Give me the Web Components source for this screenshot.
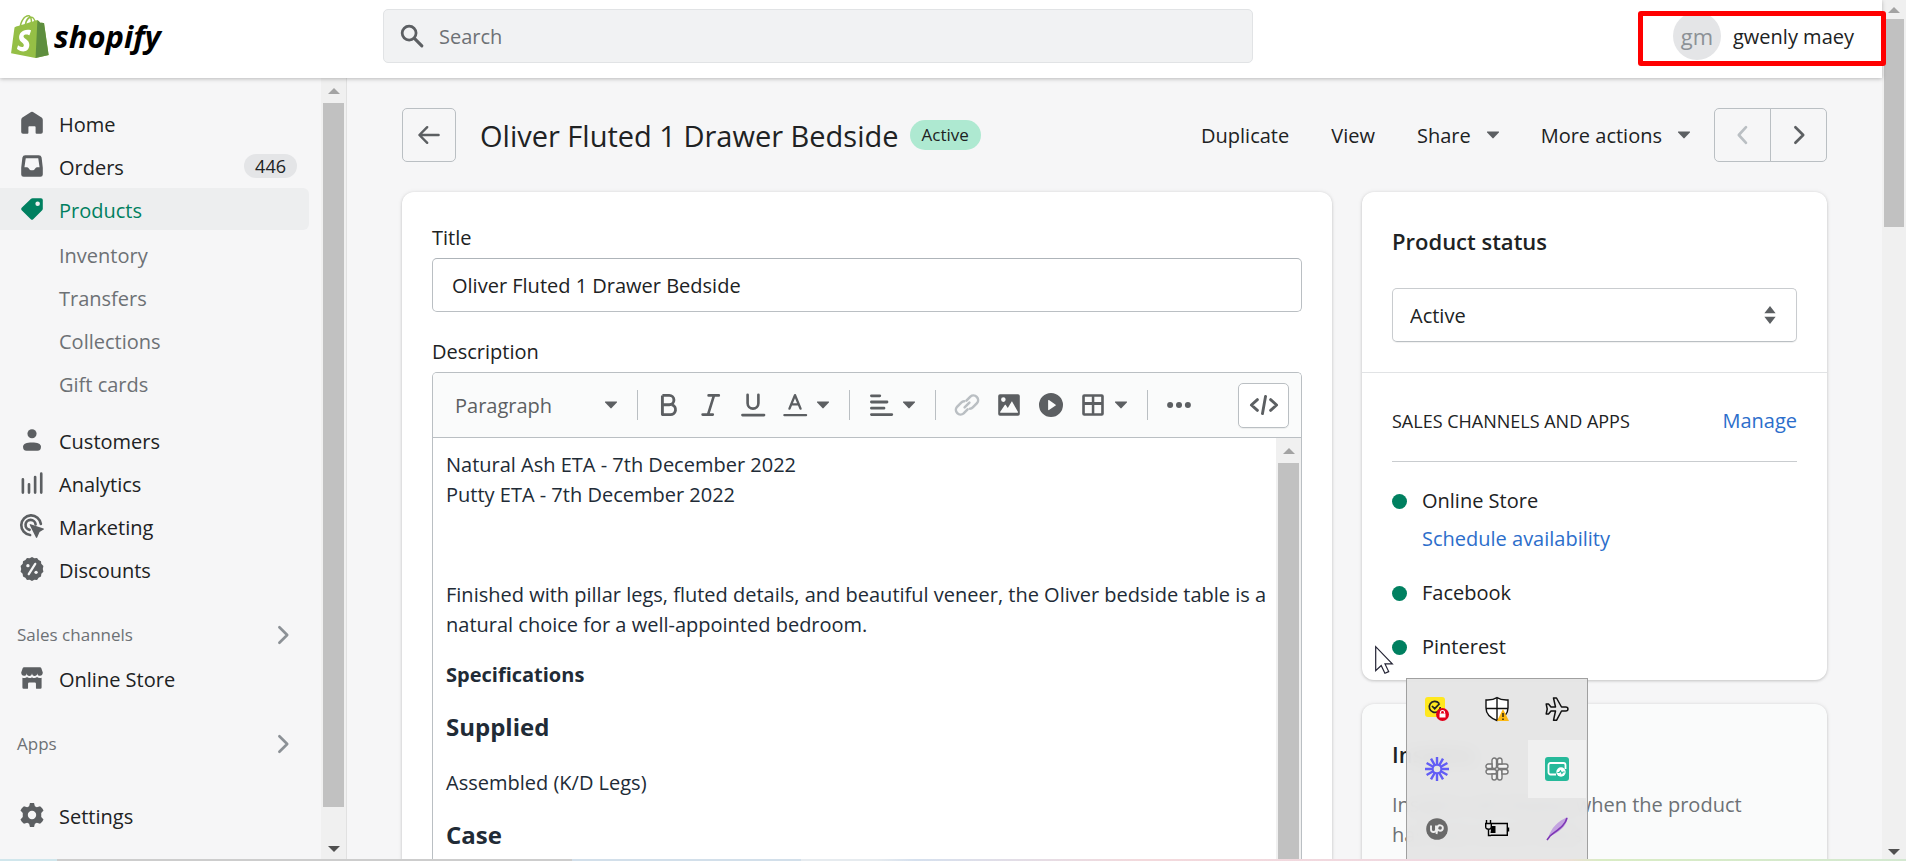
<!DOCTYPE html>
<html lang="en">
<head>
<meta charset="utf-8">
<meta name="viewport" content="width=device-width, initial-scale=1">
<title>Oliver Fluted 1 Drawer Bedside · Products</title>
<style>
  html, body { height: 100%; margin: 0; }
  body {
    --text: #202223; --subdued: #6d7175; --icon: #5c5f62; --line: #babfc3;
    --green: #008060; --link: #2c6ecb; --page: #f6f6f7;
    font: 20px/24px "Open Sans", "Noto Sans", sans-serif;
    color: var(--text); background: var(--page); overflow: hidden;
  }
</style>
</head>
<body>
<admin-shell></admin-shell>
<script>
const define = (name, html, setup) => {
  const tpl = document.createElement('template');
  tpl.innerHTML = `<style>*,*::before,*::after{box-sizing:border-box}
    button,input,select{font:inherit;color:inherit;margin:0}button{padding:0;background:none;border:0}
    a{color:inherit;text-decoration:none}</style>` + html;
  customElements.define(name, class extends HTMLElement {
    constructor() {
      super();
      this.attachShadow({ mode: 'open' }).append(tpl.content.cloneNode(true));
    }
    connectedCallback() { if (setup) setup(this, this.shadowRoot); }
  });
};

/* 20-unit icon set */
const ICONS = {
  home: '<path d="M9.2.8a1.4 1.4 0 0 1 1.600 0l7.200 4.700c.6.5 1 1.200 1 2V17.500A1.500 1.500 0 0 1 17.500 19h-3.700a.8.8 0 0 1-.8-.8V13.500a.7.7 0 0 0-.7-.7H7.700a.7.7 0 0 0-.7.7v4.700a.8.8 0 0 1-.8.8H2.500A1.500 1.500 0 0 1 1 17.500V7.500c0-.8.4-1.500 1-2z"/>',
  orders: '<path fill-rule="evenodd" d="M4.500 1h11A2.500 2.500 0 0 1 18 3l1 8.500V17a2 2 0 0 1-2 2H3a2 2 0 0 1-2-2v-5.500L2 3a2.500 2.500 0 0 1 2.500-2zM4.800 3.500 3.700 11h2.100c.5 0 .9.3 1.200.7l.8 1c.3.5.8.8 1.300.8h1.800c.5 0 1-.3 1.300-.8l.8-1c.3-.4.7-.7 1.200-.7h2.100l-1.100-7.500z"/>',
  products: '<path fill-rule="evenodd" d="M10.500 1h7A1.500 1.500 0 0 1 19 2.500v7.200c0 .5-.2 1-.5 1.300L11 18.500a1.400 1.400 0 0 1-2 0L1.400 11a1.400 1.400 0 0 1 0-2L9 1.600c.4-.4.9-.6 1.500-.6zm4.200 6.500a1.900 1.900 0 1 0 0-3.800 1.900 1.900 0 0 0 0 3.800z"/>',
  customers: '<circle cx="10" cy="4.800" r="3.800"/><path d="M2.500 15.700C2.500 13 5.500 12 10 12s7.500 1 7.500 3.700c0 2.100-1 3.300-2.900 3.300H5.400c-1.900 0-2.900-1.200-2.900-3.300z"/>',
  analytics: '<path d="M2.400 7v11M7.500 11v7M12.600 5v13M17.700 2.200V18" fill="none" stroke="currentColor" stroke-width="2.200" stroke-linecap="round"/>',
  marketing: '<path d="M17.400 8.300A8.200 8.200 0 1 0 8.400 17.500M13 8.600a4.200 4.200 0 1 0-5 4.600" fill="none" stroke="currentColor" stroke-width="2.200" stroke-linecap="round"/><path d="m8.300 8.300 11.300 3.700c.5.2.5.8.1 1l-3.400 2-2 4.600c-.2.5-.8.5-1 0L8 9z"/>',
  discounts: '<path fill-rule="evenodd" d="m10 0 2 1 2.200-.2 1.300 1.800 2 .9.200 2.200 1.800 1.900L19 10l.5 2.300-1.700 1.700-.3 2.200-2 1-1.300 1.900-2.200-.2-2 1.100-2-1.100-2.200.2-1.300-1.900-2-1-.3-2.200L.500 12.300 1 10 .5 7.600l1.800-1.900.2-2.200 2-.9L5.800.8 8 1z"/><circle cx="6.600" cy="7.200" r="1.400" fill="#f6f6f7"/><circle cx="13.400" cy="12.800" r="1.400" fill="#f6f6f7"/><path d="m12.700 5.700-5.400 8.600" stroke="#f6f6f7" stroke-width="1.900" stroke-linecap="round"/>',
  store: '<path d="M3.300 1h13.400c.4 0 .8.3 1 .7L19 5.500c0 1.700-1 2.700-2.300 2.700S14.400 7.300 14.400 6c0 1.400-1 2.300-2.200 2.300S10 7.300 10 6c0 1.300-1 2.300-2.200 2.300S5.600 7.400 5.600 6c0 1.300-1 2.200-2.300 2.200S1 7.200 1 5.500l1.300-3.800c.2-.4.6-.7 1-.7z"/><path d="M2 9.800c1.500.5 3 .2 3.800-.7 1.200 1.200 3 1.200 4.200.2 1.200 1 3 1 4.200-.2.9.9 2.300 1.200 3.800.7V18a1 1 0 0 1-1 1h-3a.7.7 0 0 1-.7-.7v-3.500a1 1 0 0 0-1-1H7.700a1 1 0 0 0-1 1v3.500a.7.7 0 0 1-.7.7H3a1 1 0 0 1-1-1z"/>',
  settings: '<path fill-rule="evenodd" d="M8.300 0h3.400l.7 2.700 1.600.9 2.700-.8 1.800 1.500 1.100 1.900-1.900 2.100v3.400l1.900 2.100-1.100 1.900-1.800 1.500-2.700-.8-1.600.9-.7 2.700H8.300l-.7-2.700-1.600-.9-2.700.8-1.800-1.500-1.100-1.900 1.900-2.100V8.300L.4 6.200l1.100-1.900 1.800-1.500 2.700.8 1.600-.9zM10 13.500a3.500 3.500 0 1 0 0-7 3.500 3.500 0 0 0 0 7z"/>',
  search: '<path d="m12.200 12.200 6 6" fill="none" stroke="currentColor" stroke-width="2.600" stroke-linecap="round"/><circle cx="7.600" cy="7.600" r="5.800" fill="none" stroke="currentColor" stroke-width="2.300"/>',
  back: '<path d="M18 10H3M8.500 3.500 2 10l6.500 6.500" fill="none" stroke="currentColor" stroke-width="2" stroke-linecap="round" stroke-linejoin="round"/>',
  left: '<path d="m12.500 3.500-6 6.500 6 6.500" fill="none" stroke="currentColor" stroke-width="2.200" stroke-linecap="round" stroke-linejoin="round"/>',
  right: '<path d="m7 3.500 6.500 6.500-6.500 6.500" fill="none" stroke="currentColor" stroke-width="2.200" stroke-linecap="round" stroke-linejoin="round"/>',
  caret: '<path d="M5.500 7h9c.5 0 .7.5.4.9l-4.400 4.700a.7.7 0 0 1-1 0L5.100 7.900c-.3-.4-.1-.9.4-.9z"/>',
  updown: '<path d="M10 2.500 14.700 8.500H5.300zM10 17.500l4.700-6H5.300z"/>',
  bold: '<path d="M4.500 2v16H11a4.200 4.200 0 0 0 1.500-8.200M4.500 2h5.700a3.900 3.900 0 0 1 0 7.800H4.500" fill="none" stroke="currentColor" stroke-width="2.400" stroke-linejoin="round"/>',
  italic: '<path d="M8 2h8.500M3 18h8.500M12.500 2 7.500 18" fill="none" stroke="currentColor" stroke-width="2.200" stroke-linecap="round"/>',
  underline: '<path d="M1.200 18.400h18M5.500 1.500v7a4.500 4.500 0 0 0 9 0v-7" fill="none" stroke="currentColor" stroke-width="2.200" stroke-linecap="round"/>',
  color: '<path d="M1.200 18.400h18M5.400 13 10 1.800 14.600 13M6.800 9.500h6.400" fill="none" stroke="currentColor" stroke-width="2" stroke-linecap="round" stroke-linejoin="round"/>',
  align: '<path d="M2 2.300h7M2 7.500h13M2 12.700h10.500M2 18h17" fill="none" stroke="currentColor" stroke-width="2.300" stroke-linecap="round"/>',
  link: '<g fill="none" stroke="currentColor" stroke-width="2.100" stroke-linecap="round"><path d="m9.500 6.300 3.300-3.300a3.900 3.900 0 0 1 5.500 5.500l-3.500 3.500a3.900 3.900 0 0 1-2.400 1.100"/><path d="m10.500 13.700-3.300 3.300a3.900 3.900 0 0 1-5.500-5.500l3.500-3.500a3.900 3.900 0 0 1 2.400-1.100M8 12l4-4"/></g>',
  image: '<path fill-rule="evenodd" d="M2.500 1h15A1.500 1.500 0 0 1 19 2.500v15a1.500 1.500 0 0 1-1.500 1.500h-15A1.500 1.500 0 0 1 1 17.500v-15A1.500 1.500 0 0 1 2.500 1zM5.300 7.400a1.900 1.900 0 1 0 0-3.800 1.900 1.900 0 0 0 0 3.800zM3 16.500h14c.4 0 .6-.4.400-.8l-4.600-8.300c-.2-.3-.6-.3-.8 0l-3 5-1.700-2.300c-.2-.3-.6-.3-.8 0L2.700 15.700c-.2.4 0 .8.300.8z"/>',
  play: '<path fill-rule="evenodd" d="M10 20a10 10 0 1 0 0-20 10 10 0 0 0 0 20zM7.600 6.200v7.600c0 .4.4.6.7.4l5.600-3.700c.3-.2.3-.6 0-.8L8.300 5.900c-.3-.3-.7 0-.7.300z"/>',
  table: '<path fill-rule="evenodd" d="M2.700 1h14.600A1.700 1.700 0 0 1 19 2.700v14.600a1.700 1.700 0 0 1-1.700 1.700H2.700A1.700 1.700 0 0 1 1 17.300V2.700A1.700 1.700 0 0 1 2.700 1zM3.200 3.200V7.500H9V3.200zm7.900 0V7.500h5.700V3.200zM3.200 9.900v6.900H9V9.900zm7.900 0v6.900h5.700V9.900z"/>',
  dots: '<circle cx="2.600" cy="10" r="2.500"/><circle cx="10" cy="10" r="2.500"/><circle cx="17.400" cy="10" r="2.500"/>',
  code: '<path d="M4.500 5.500-.500 10l5 4.500M15.500 5.500l5 4.500-5 4.500M11.300 2.800 8.700 17.200" fill="none" stroke="currentColor" stroke-width="2.400" stroke-linecap="round" stroke-linejoin="round"/>'
};

define('ui-icon', `<style>:host{display:inline-flex;flex:none;width:24px;height:24px;color:var(--icon)}
  svg{width:100%;height:100%;overflow:visible;fill:currentColor}</style><svg viewBox="0 0 20 20" aria-hidden="true"></svg>`,
  (el, root) => { root.querySelector('svg').innerHTML = ICONS[el.getAttribute('name')]; });

/* Scroll track: thumb length comes from --thumb, "both" adds the lower arrow */
define('scroll-rail', `<style>
  :host{display:flex;flex-direction:column;flex:none;width:24px;background:#f0f0f0;padding:0 2px}
  .arrow{height:25px;flex:none;display:grid;place-items:center}
  .thumb{height:var(--thumb,100%);flex:0 1 auto;background:#c1c1c1}
  .rest{flex:1 0 0}
  .arrow.down{display:none}:host([both]) .arrow.down{display:grid}
  svg{width:12px;height:6px}
  :host([compact]) .arrow{height:19px}
  </style><div class="arrow"><svg viewBox="0 0 12 6" fill="#a3a3a3"><path d="M6 0l6 6H0z"/></svg></div>
  <div class="thumb"></div><div class="rest"></div>
  <div class="arrow down"><svg viewBox="0 0 12 6" fill="#505050"><path d="M0 0h12L6 6z"/></svg></div>`);

define('shop-logo', `<style>
  :host{display:block}
  a{display:flex;align-items:center;gap:5px;height:44px;color:#000}
  svg{width:38px;height:43px}
  span{font:italic 700 31px/44px "Open Sans",sans-serif}
  </style><a href="#"><svg viewBox="0 0 256 292" aria-hidden="true">
  <path fill="#95bf46" d="M223.774 57.34c-.201-1.46-1.48-2.268-2.537-2.357-1.055-.088-23.383-1.743-23.383-1.743s-15.507-15.395-17.209-17.099c-1.703-1.703-5.029-1.185-6.32-.805-.19.056-3.388 1.043-8.678 2.68-5.18-14.906-14.322-28.604-30.405-28.604-.444 0-.901.018-1.358.044C129.31 3.407 123.644.779 118.75.779c-37.465 0-55.364 46.835-60.976 70.635-14.558 4.511-24.9 7.718-26.221 8.133-8.126 2.549-8.383 2.805-9.45 10.462C21.3 95.806.038 260.235.038 260.235l165.678 31.042 89.77-19.42S223.973 58.8 223.775 57.34zM156.49 40.848l-14.019 4.339c.005-.988.01-1.96.01-3.023 0-9.264-1.286-16.723-3.349-22.636 8.287 1.04 13.806 10.469 17.358 21.32zm-27.638-19.483c2.304 5.773 3.802 14.058 3.802 25.238 0 .572-.005 1.095-.01 1.624-9.117 2.824-19.024 5.89-28.953 8.966 5.575-21.516 16.025-31.908 25.161-35.828zm-11.131-10.537c1.617 0 3.246.549 4.805 1.622-12.007 5.65-24.877 19.88-30.312 48.297l-22.886 7.088C75.694 46.16 90.81 10.828 117.72 10.828z"/>
  <path fill="#5e8e3e" d="M221.237 54.983c-1.055-.088-23.383-1.743-23.383-1.743s-15.507-15.395-17.209-17.099c-.637-.634-1.496-.959-2.394-1.099l-12.527 256.233 89.762-19.418S223.972 58.8 223.774 57.34c-.201-1.46-1.48-2.268-2.537-2.357"/>
  <path fill="#fff" d="M135.242 104.585l-11.069 32.926s-9.698-5.176-21.586-5.176c-17.428 0-18.305 10.937-18.305 13.693 0 15.038 39.2 20.8 39.2 56.024 0 27.713-17.577 45.558-41.277 45.558-28.44 0-42.984-17.7-42.984-17.7l7.615-25.16s14.95 12.835 27.565 12.835c8.243 0 11.596-6.49 11.596-11.232 0-19.616-32.16-20.491-32.16-52.724 0-27.129 19.472-53.382 58.778-53.382 15.145 0 22.627 4.338 22.627 4.338"/>
  </svg><span>shopify</span></a>`);

define('top-bar', `<style>
  :host{display:grid;grid-template-columns:383px minmax(0,870px) 1fr;align-items:start;height:78px;background:#fff;
    box-shadow:0 1px 4px rgba(0,0,0,.25);position:relative;z-index:2;flex:none}
  shop-logo{padding:14px 0 0 11px}
  .search{display:flex;align-items:center;gap:15px;height:54px;margin-top:9px;padding:0 16px;background:#f1f2f3;border:1px solid #e1e3e5;border-radius:5px}
  .search input{flex:1;min-width:0;border:0;background:none;outline:0;padding:2px 0 0}
  .search input::placeholder{color:var(--subdued);opacity:1}
  .user{position:relative;justify-self:end;display:flex;align-items:center;gap:12px;margin:12px 20px 0 0;height:48px}
  .name{padding-top:2px;min-width:129px;text-align:left}
  .avatar{display:grid;place-items:center;width:48px;height:48px;border-radius:50%;background:#e4e5e7;color:#8c9196;font-size:22px}
  .mark{position:absolute;inset:-1px -24px -6px -35px;border:5px solid #f00;border-radius:3px}
  </style><shop-logo></shop-logo>
  <label class="search"><ui-icon name="search"></ui-icon><input type="search" placeholder="Search" aria-label="Search"></label>
  <button class="user"><span class="avatar">gm</span><span class="name">gwenly maey</span><span class="mark"></span></button>`);

define('nav-item', `<style>
  :host{display:block;width:309px}
  a{display:flex;align-items:center;height:42px;padding:0 12px 0 20px;border-radius:0 6px 6px 0}
  ui-icon{margin-right:15px}
  .text{padding-top:3px}
  slot[name=badge]{display:block;margin-left:auto}
  ::slotted([slot=badge]){margin-left:auto;height:30px;padding:0 11px;border-radius:15px;background:#e4e5e7;font-size:18px;line-height:30px}
  :host([sub]) a{padding-left:59px;color:var(--subdued)}
  :host([sub]) ui-icon{display:none}
  :host([current]) a{background:#edeeef;color:var(--green)}
  :host([current]) ui-icon{color:var(--green)}
  </style><a href="#"><ui-icon name="home"></ui-icon><span class="text"><slot></slot></span><slot name="badge"></slot></a>`,
  (el, root) => {
    const icon = root.querySelector('ui-icon'), name = el.getAttribute('icon');
    if (name) { const next = document.createElement('ui-icon'); next.setAttribute('name', name); icon.replaceWith(next); }
  });

define('nav-section', `<style>:host{display:block;width:309px}
  button{display:flex;width:100%;height:42px;align-items:center;justify-content:space-between;padding:0 14px 0 17px;color:var(--subdued);font-size:17px}
  ui-icon{color:#8c9196}</style><button><span><slot></slot></span><ui-icon name="right"></ui-icon></button>`);

define('side-nav', `<style>
  :host{display:flex;width:347px;flex:none;border-right:1px solid #e1e1e1}
  nav{flex:1;display:flex;flex-direction:column;padding:24px 0 25px}
  .group{display:flex;flex-direction:column;gap:1px}
  .sub{padding-top:3px}.people{padding-top:15px}.section{padding-top:24px}
  .bottom{margin-top:auto}
  scroll-rail{width:25px;--thumb:704px}
  </style><nav aria-label="Main">
  <div class="group">
    <nav-item icon="home">Home</nav-item>
    <nav-item icon="orders">Orders<span slot="badge">446</span></nav-item>
    <nav-item icon="products" current>Products</nav-item></div>
  <div class="group sub">
    <nav-item sub>Inventory</nav-item><nav-item sub>Transfers</nav-item>
    <nav-item sub>Collections</nav-item><nav-item sub>Gift cards</nav-item></div>
  <div class="group people">
    <nav-item icon="customers">Customers</nav-item><nav-item icon="analytics">Analytics</nav-item>
    <nav-item icon="marketing">Marketing</nav-item><nav-item icon="discounts">Discounts</nav-item></div>
  <div class="group section"><nav-section>Sales channels</nav-section><nav-item icon="store">Online Store</nav-item></div>
  <div class="group section"><nav-section>Apps</nav-section></div>
  <div class="group bottom"><nav-item icon="settings">Settings</nav-item></div>
  </nav><scroll-rail both></scroll-rail>`);

define('page-header', `<style>
  :host{display:flex;align-items:center;height:54px}
  .box{display:grid;place-items:center;width:54px;height:54px;border:1px solid var(--line);border-radius:5px}
  h1{margin:0 11px 0 24px;padding-top:2px;font-size:29px;line-height:36px;font-weight:500;white-space:nowrap}
  .status{height:30px;padding:0 12px;border-radius:15px;background:#aee9d1;font-size:17px;line-height:30px}
  .actions{display:flex;align-items:center;gap:42px;margin:0 24px 0 auto;white-space:nowrap}
  .actions button{display:flex;align-items:center;gap:10px;padding-top:2px}
  .actions ui-icon{margin:-2px -6px 0 0}
  .pager{display:flex}
  .pager .box{width:57px;border-radius:5px 0 0 5px}
  .pager .box + .box{border-radius:0 5px 5px 0;margin-left:-1px}
  .pager .box[disabled] ui-icon{color:var(--line)}
  </style>
  <button class="box" aria-label="Back"><ui-icon name="back"></ui-icon></button>
  <h1>Oliver Fluted 1 Drawer Bedside</h1><span class="status">Active</span>
  <div class="actions"><button>Duplicate</button><button>View</button>
    <button>Share<ui-icon name="caret"></ui-icon></button><button>More actions<ui-icon name="caret"></ui-icon></button></div>
  <div class="pager"><button class="box" disabled aria-label="Previous"><ui-icon name="left"></ui-icon></button><button class="box" aria-label="Next"><ui-icon name="right"></ui-icon></button></div>`);

define('surface-card', `<style>
  :host{display:block;background:#fff;border-radius:12px;box-shadow:0 0 5px rgba(23,24,24,.07),0 1px 3px rgba(0,0,0,.17)}
  :host([muted]){background:#fafbfb}
  </style><slot></slot>`);

define('tool-button', `<style>:host{display:block;flex:none}
  button{display:flex;align-items:center;height:42px}
  .cell{width:42px;display:grid;place-items:center}
  .caret{display:none;width:23px;height:20px}
  .caret ui-icon{margin:-2px 0 0 -9px}
  :host([menu]) .caret{display:block}
  :host([off]) .cell ui-icon{color:var(--line)}
  </style><button><span class="cell"></span><span class="caret"><ui-icon name="caret"></ui-icon></span></button>`,
  (el, root) => {
    const i = document.createElement('ui-icon'); i.setAttribute('name', el.getAttribute('icon'));
    root.querySelector('.cell').replaceChildren(i);
    root.querySelector('button').setAttribute('aria-label', el.getAttribute('icon'));
  });

define('rich-editor', `<style>
  :host{display:flex;flex-direction:column;min-height:0;border:1px solid var(--line);border-bottom:0;border-radius:5px 5px 0 0;background:#fff;overflow:hidden}
  .bar{display:flex;align-items:center;flex:none;height:65px;padding:0 12px 0 22px;background:#fafbfb;border-bottom:1px solid var(--line)}
  .style{position:relative;display:flex;align-items:center;width:172px;margin-right:10px}
  select{appearance:none;border:0;background:none;width:100%;padding:2px 0 0;color:var(--icon);outline:0}
  .style ui-icon{position:absolute;right:4px;top:1px;pointer-events:none}
  .rule{width:1px;height:30px;background:var(--line);margin:0 10px}
  .style + .rule{margin-left:0}
  .code{margin-left:auto;display:grid;place-items:center;width:51px;height:45px;background:#fff;border:1px solid var(--line);border-radius:5px;box-shadow:0 1px 1px rgba(0,0,0,.06)}
  .body{flex:1;display:flex;min-height:0}
  .text{flex:1;min-width:0;overflow:hidden;padding:12px 4px 0 13px;color:#212b36;line-height:30px;outline:0}
  p,h2{margin:0 0 20px}
  h2{font-size:24px;font-weight:700;line-height:34px;margin-bottom:24px}
  .gap{height:50px;margin:0}
  scroll-rail{width:25px}
  </style>
  <div class="bar">
    <div class="style"><select aria-label="Text style"><option>Paragraph</option></select><ui-icon name="caret"></ui-icon></div>
    <span class="rule"></span>
    <tool-button icon="bold"></tool-button><tool-button icon="italic"></tool-button><tool-button icon="underline"></tool-button><tool-button icon="color" menu></tool-button>
    <span class="rule"></span><tool-button icon="align" menu></tool-button><span class="rule"></span>
    <tool-button icon="link" off></tool-button><tool-button icon="image"></tool-button><tool-button icon="play"></tool-button><tool-button icon="table" menu></tool-button>
    <span class="rule"></span><tool-button icon="dots"></tool-button>
    <button class="code" aria-label="Show HTML"><ui-icon name="code"></ui-icon></button>
  </div>
  <div class="body"><div class="text" contenteditable="true" spellcheck="false" role="textbox" aria-label="Description">
    <p>Natural Ash ETA - 7th December 2022<br>Putty ETA - 7th December 2022</p>
    <div class="gap"></div>
    <p>Finished with pillar legs, fluted details, and beautiful veneer, the Oliver bedside table is a natural choice for a well-appointed bedroom.</p>
    <p><strong>Specifications</strong></p>
    <h2>Supplied</h2><p>Assembled (K/D Legs)</p><h2>Case</h2>
  </div><scroll-rail></scroll-rail></div>`);

define('product-form', `<style>
  :host{display:flex;flex-direction:column;height:100%;padding:30px 30px 0}
  label,.label{display:block;line-height:32px;margin-bottom:4px}
  input{display:block;flex:none;width:100%;height:54px;padding:0 19px;border:1px solid var(--line);border-top-color:#aeb4b9;border-radius:5px;background:#fff;outline:0;margin-bottom:24px}
  rich-editor{flex:1}
  </style><label for="title">Title</label><input id="title" value="Oliver Fluted 1 Drawer Bedside">
  <span class="label">Description</span><rich-editor></rich-editor>`);

define('channel-row', `<style>:host{display:grid;grid-template-columns:15px 1fr;column-gap:15px;align-items:center;line-height:30px}
  i{width:15px;height:15px;border-radius:50%;background:var(--green)}
  ::slotted(a){grid-column:2;margin-top:8px}
  </style><i></i><span><slot></slot></span><slot name="link"></slot>`);

define('status-panel', `<style>
  :host{display:block}
  section{padding:30px}
  section + section{border-top:1px solid #e1e3e5;padding-bottom:18px}
  h2{margin:4px 0 32px;font-size:22px;line-height:30px;font-weight:600}
  .pick{position:relative}
  select{appearance:none;display:block;width:100%;height:54px;padding:2px 17px 0;border:1px solid #c9cccf;border-bottom-color:var(--line);border-radius:5px;background:#fff;outline:0;box-shadow:0 1px 1px rgba(0,0,0,.06)}
  .pick ui-icon{position:absolute;right:15px;top:15px;pointer-events:none}
  .head{display:flex;align-items:center;justify-content:space-between;height:59px;padding-bottom:23px;border-bottom:1px solid #c9cccf;margin-bottom:24px}
  h3{margin:0;font-size:18px;line-height:24px;font-weight:500;text-transform:uppercase}
  .head a,channel-row a{color:var(--link)}
  .list{display:flex;flex-direction:column;gap:24px}
  </style>
  <section><h2 id="st">Product status</h2><div class="pick"><select aria-labelledby="st"><option>Active</option></select><ui-icon name="updown"></ui-icon></div></section>
  <section><div class="head"><h3>Sales channels and apps</h3><a href="#">Manage</a></div>
    <div class="list"><channel-row>Online Store<a slot="link" href="#">Schedule availability</a></channel-row>
    <channel-row>Facebook</channel-row><channel-row>Pinterest</channel-row></div></section>`);

define('insights-panel', `<style>:host{display:block;padding:35px 30px 30px}
  h2{margin:0 0 21px;font-size:22px;line-height:30px;font-weight:600}
  p{margin:0;padding-right:30px;line-height:30px;color:var(--subdued)}</style>
  <h2>Insights</h2><p>Insights will display when the product has had recent sales</p>`);

/* Notification-area flyout */
define('tray-flyout', `<style>
  :host{display:grid;grid-template-columns:repeat(3,60px);grid-auto-rows:60px;width:182px;height:181px;border:1px solid #a0a0a0;border-bottom:0;
    background:rgba(228,228,228,.94);backdrop-filter:blur(8px);overflow:hidden;box-sizing:border-box}
  button{display:grid;place-items:center;width:60px;height:60px}
  button.on{background:#f0f0f0;height:58px;width:58px;margin:1px}
  svg{width:24px;height:24px;overflow:visible}
  </style>
  <button aria-label="Antivirus"><svg viewBox="0 0 24 24"><rect width="20" height="20" rx="3" fill="#ffe81f"/><path d="M14 6.300A5.500 5.500 0 1 0 15.300 10M7 9l2.700 2.700 5-5.200" fill="none" stroke="#222" stroke-width="1.700"/><circle cx="17.500" cy="17.500" r="6.500" fill="#e3001b"/><path d="M14.500 16.500h6v4h-6z" fill="#fff"/><path d="M15.500 16.500v-1a2 2 0 0 1 4 0v1" fill="none" stroke="#fff" stroke-width="1.200"/></svg></button>
  <button aria-label="Security"><svg viewBox="0 0 24 24"><path d="M12 .7c3 2 7 2.500 11 2.300v8c0 6-4.500 10-11 12.500C5.500 21 1 17 1 11V3c4 .2 8-.3 11-2.300z" fill="#fff" stroke="#111" stroke-width="1.400"/><path d="M12 1v22M1 11.500h22" stroke="#111" stroke-width="1.400"/><path d="m18 12 6 12H12z" fill="#fdb913"/><path d="M18 16v4M18 21.500V23" stroke="#111" stroke-width="1.300"/></svg></button>
  <button aria-label="Airplane mode"><svg viewBox="0 0 24 24" fill="none" stroke="#111" stroke-width="1.500" stroke-linejoin="round"><path d="M8.500 1h3l5 9h4.200c3 0 3 4 0 4h-4.200l-5 9.300h-3l2-9.300H6l-2.500 3H1.200l1-5-1-5h2.300L6 10h4.500z"/></svg></button>
  <button aria-label="Loom"><svg viewBox="0 0 24 24"><g stroke="#625df5" stroke-width="2.400"><path d="M12 0v8M12 16v8M0 12h8M16 12h8M6 1.600l4 7M14 15.400l4 7M1.600 6l7 4M15.400 14l7 4M1.600 18l7-4M15.400 10l7-4M6 22.400l4-7M14 8.600l4-7"/></g><circle cx="12" cy="12" r="4.300" fill="none" stroke="#625df5" stroke-width="2"/></svg></button>
  <button aria-label="Slack"><svg viewBox="0 0 24 24" fill="#f4f4f4" stroke="#777" stroke-width="1.400"><rect x="7" y="1" width="4.500" height="10.500" rx="2.200"/><rect x="12.500" y="12.500" width="4.500" height="10.500" rx="2.200"/><rect x="12.500" y="7" width="10.500" height="4.500" rx="2.200"/><rect x="1" y="12.500" width="10.500" height="4.500" rx="2.200"/><path d="M17 7V3.200a2.200 2.200 0 0 0-4.500 0V7zM7 17v3.800a2.200 2.200 0 0 0 4.500 0V17zM7 7H3.200a2.200 2.200 0 0 0 0 4.500H7zM17 17h3.800a2.200 2.200 0 0 0 0-4.500H17z"/></svg></button>
  <button class="on" aria-label="Screen monitor"><svg viewBox="0 0 24 24"><rect width="24" height="24" rx="3" fill="#26b99a"/><path d="M11 17.500H5.500a2 2 0 0 1-2-2V8a2 2 0 0 1 2-2h13a2 2 0 0 1 2 2v4" fill="none" stroke="#fff" stroke-width="1.800"/><circle cx="16" cy="15" r="4.700" fill="#fff"/><path d="M12.500 15.500h1.700l1.300-1.700 1.400 2.700 1.200-1.500h1.500" fill="none" stroke="#26b99a" stroke-width="1.200"/></svg></button>
  <button aria-label="Upwork"><svg viewBox="0 0 24 24"><circle cx="12" cy="12" r="10.800" fill="#6a6a6a"/><path d="M6 8.500v4a2.500 2.500 0 0 0 5 0v-4M11.500 17l1-6.500a2.700 2.700 0 1 1 2.700 3.200c-1.500 0-2.600-1-3.700-3" fill="none" stroke="#eee" stroke-width="1.900"/></svg></button>
  <button aria-label="Battery"><svg viewBox="0 0 24 24" fill="none" stroke="#000" stroke-width="1.400"><path d="M7 6.500h15.300v11.800H6M23.500 10.500v4"/><path d="M6.500 9h4v7h-5z" fill="#000" stroke="none"/><path d="M1.500 3v3M5.500 3v3M.7 6.500h5.600V10c0 3-5.600 3-5.600 0zM3.500 12.500v6H6"/></svg></button>
  <button aria-label="Feather"><svg viewBox="0 0 24 24"><path d="M22.500 0C22 9 15 15 3.500 20 6 11 13 4 22.500 0z" fill="#c3a3e0"/><path d="M22 1C20 9 12 13 5 19L2 23" fill="none" stroke="#7d35b5" stroke-width="1.600"/></svg></button>`);

define('pointer-arrow', `<style>:host{display:block;width:18px;height:28px}svg{display:block;width:100%;height:100%;overflow:visible}</style>
  <svg viewBox="0 0 18 28" aria-hidden="true"><path d="M.7.7v24l5.500-5.200 3.700 7.800 3.800-1.700-3.700-7.700h7.300z" fill="#fff" stroke="#223" stroke-width="1.200"/></svg>`);

define('admin-shell', `<style>
  :host{display:flex;height:100vh;position:relative;overflow:hidden}
  .app{flex:1;min-width:0;display:flex;flex-direction:column}
  .body{flex:1;display:flex;min-height:0}
  main{flex:1;min-width:0;display:flex;flex-direction:column;padding:30px 55px 0;gap:30px}
  .cols{flex:1;display:grid;grid-template-columns:2fr 1fr;gap:30px;min-height:0}
  .cols > surface-card{border-radius:12px 12px 0 0;min-height:0;min-width:0}
  .side{display:flex;flex-direction:column;gap:24px;min-height:0;min-width:0}
  .side > *{flex:none}
  .strip{position:absolute;left:0;right:0;bottom:0;height:2px;z-index:4;background:linear-gradient(90deg,#d0e6ec 0 3%,#cdcdcd 3% 30%,#d2dfea 30% 42%,#e6ebef 42% 46%,#d5e0ee 48%,#f3d9dc 60%,#f0d8e0 75%,#f1dcd8 82%,#d9ecc4 84%,#d3e8d0 100%)}
  tray-flyout{position:absolute;right:318px;bottom:2px;z-index:3}
  pointer-arrow{position:absolute;right:513px;top:646px;z-index:3}
  scroll-rail{--thumb:208px}
  </style>
  <div class="app"><top-bar></top-bar><div class="body"><side-nav></side-nav>
    <main><page-header></page-header>
      <div class="cols"><surface-card><product-form></product-form></surface-card>
        <div class="side"><surface-card><status-panel></status-panel></surface-card><surface-card muted><insights-panel></insights-panel></surface-card></div></div></main></div></div>
  <scroll-rail both compact></scroll-rail>
  <tray-flyout></tray-flyout><pointer-arrow></pointer-arrow><div class="strip"></div>`);
</script>
</body>
</html>
